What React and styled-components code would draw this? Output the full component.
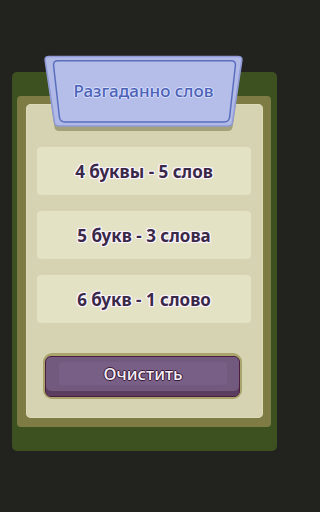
import React from "react";
import styled, { createGlobalStyle } from "styled-components";

const counts = [
    "4 буквы - 5 слов",
    "5 букв - 3 слова",
    "6 букв - 1 слово",
];

const GlobalStyle = createGlobalStyle`
    html, body {
        margin: 0;
        padding: 0;
        background: #22231e;
    }
    body {
        font-family: "Noto Sans", "DejaVu Sans", sans-serif;
    }
`;

const App = () => {
    return (
        <Page>
            <GlobalStyle />
            <Frame>
                <Tab>
                    <TabShape viewBox="0 0 201 77" aria-hidden="true">
                        <path
                            d="M7 5 L194 5 Q199 5 198.4 9 L189.6 72 Q189 76 185 76 L16 76 Q12 76 11.4 72 L2.6 9 Q2 5 7 5 Z"
                            fill="#a3a17c"
                        />
                        <path
                            d="M6 1.5 L195 1.5 Q199.5 1.5 198.8 5.5 L189.6 67 Q189 71 185 71 L16 71 Q12 71 11.4 67 L2.2 5.5 Q1.5 1.5 6 1.5 Z"
                            fill="#b1bae6"
                            stroke="#8e99d6"
                            strokeWidth="1.6"
                        />
                        <path
                            d="M15 5.8 L188 5.8 Q193 5.8 192.4 10.5 L186.6 62 Q186 67 181 67 L22 67 Q17 67 16.4 62 L10.6 10.5 Q10 5.8 15 5.8 Z"
                            fill="#b5bee9"
                            stroke="#5a6ebe"
                            strokeWidth="1.5"
                        />
                    </TabShape>
                    <TabTitle>Разгаданно слов</TabTitle>
                </Tab>
                <Olive>
                    <Card>
                        <List>
                            {counts.map(text => (
                                <CountRow key={text}>{text}</CountRow>
                            ))}
                        </List>
                        <ButtonRing>
                            <ClearButton type="button">
                                <ClearLabel>Очистить</ClearLabel>
                            </ClearButton>
                        </ButtonRing>
                    </Card>
                </Olive>
            </Frame>
        </Page>
    );
};

/* Styled Components */
const Page = styled.div`
    width: 288px;
    height: 512px;
    padding-top: 72px;
    box-sizing: border-box;
    overflow: hidden;
`;

const Frame = styled.div`
    position: relative;
    margin: 0 11px 0 12px;
    height: 379px;
    box-sizing: border-box;
    padding: 24px 6px 24px 5px;
    background: #3d5120;
    border-radius: 5px;
`;

const Tab = styled.div`
    position: absolute;
    top: -17px;
    left: 31px;
    width: 201px;
    height: 77px;
    display: flex;
    justify-content: center;
    padding-top: 24px;
    box-sizing: border-box;
    z-index: 2;
`;

const TabShape = styled.svg`
    position: absolute;
    inset: 0;
    width: 201px;
    height: 77px;
`;

const TabTitle = styled.div`
    position: relative;
    font-size: 17px;
    font-weight: 500;
    color: #4c63b5;
    text-shadow:
        1px 0 0 #d8deff, -1px 0 0 #d8deff,
        0 1px 0 #d8deff, 0 -1px 0 #d8deff;
`;

const Olive = styled.div`
    height: 100%;
    box-sizing: border-box;
    padding: 8px 8px 9px 9px;
    background: #7e7c44;
    border-radius: 4px;
`;

const Card = styled.div`
    height: 100%;
    box-sizing: border-box;
    padding: 43px 12px 0 11px;
    background: #d5d3b1;
    border-radius: 5px;
    box-shadow: inset 0 0 0 1px #dcdab9;
    display: flex;
    flex-direction: column;
`;

const List = styled.div`
    display: flex;
    flex-direction: column;
    gap: 16px;
`;

const CountRow = styled.div`
    height: 48px;
    display: flex;
    align-items: center;
    justify-content: center;
    background: #e4e2c4;
    border-radius: 4px;
    font-size: 17px;
    font-weight: 700;
    color: #3a2946;
    text-shadow:
        1.2px 0 0 #fbf4ff, -1.2px 0 0 #fbf4ff,
        0 1.2px 0 #fbf4ff, 0 -1.2px 0 #fbf4ff,
        1px 1px 0 #fbf4ff, -1px -1px 0 #fbf4ff,
        1px -1px 0 #fbf4ff, -1px 1px 0 #fbf4ff;
`;

const ButtonRing = styled.div`
    margin: 30px 9px 0 6px;
    padding: 3px 2px 2px 2px;
    background: #a8a46c;
    border-radius: 9px;
`;

const ClearButton = styled.button`
    width: 100%;
    height: 41px;
    display: flex;
    padding: 5px 12px 11px 13px;
    box-sizing: border-box;
    background: #725a7f;
    border: 1.5px solid #4b1b40;
    border-radius: 6px;
    box-shadow: inset 0 -5px 0 #5b3d5f;
    cursor: pointer;
`;

const ClearLabel = styled.span`
    flex: 1;
    display: flex;
    align-items: center;
    justify-content: center;
    background: #785f86;
    border-radius: 4px;
    font-family: "Noto Sans", "DejaVu Sans", sans-serif;
    font-size: 17px;
    font-weight: 500;
    color: #f5eff6;
    text-shadow:
        1px 0 0 #3a1836, -1px 0 0 #3a1836,
        0 1px 0 #3a1836, 0 -1px 0 #3a1836;
`;

export default App;
